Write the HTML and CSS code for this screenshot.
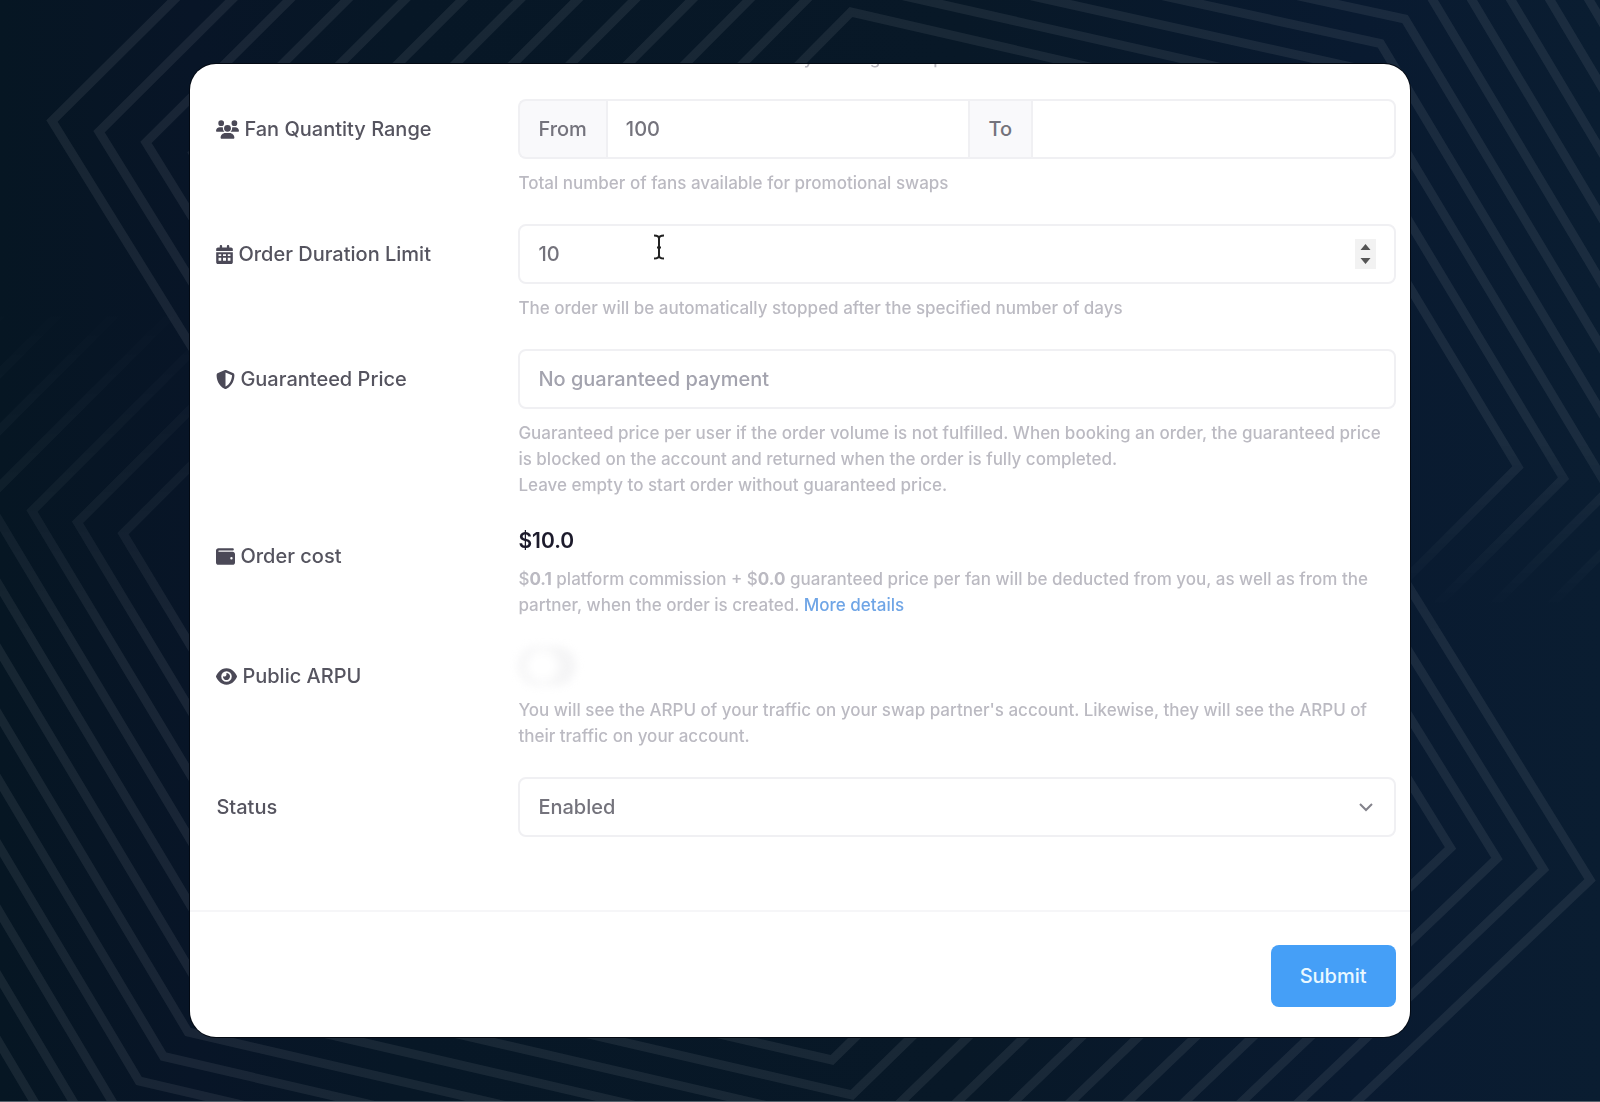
FILE: index.html
```html
<!DOCTYPE html>
<html lang="en">
<head>
    <meta charset="UTF-8">
    <meta name="viewport" content="width=device-width, initial-scale=1.0">
    <title>Order settings</title>
    <link rel="stylesheet" href="styles.css">
</head>
<body>
    <svg class="backdrop" viewBox="0 0 1600 1102" preserveAspectRatio="xMidYMid slice" aria-hidden="true">
        <defs>
            <linearGradient id="fadeDown" gradientUnits="userSpaceOnUse" x1="0" y1="0" x2="0" y2="1102">
                <stop offset="0.4" stop-color="#fff"/>
                <stop offset="0.56" stop-color="#000"/>
            </linearGradient>
            <linearGradient id="fadeUp" gradientUnits="userSpaceOnUse" x1="0" y1="0" x2="0" y2="1102">
                <stop offset="0.26" stop-color="#000"/>
                <stop offset="0.58" stop-color="#fff"/>
            </linearGradient>
            <mask id="topMask" maskUnits="userSpaceOnUse" x="0" y="0" width="1600" height="1102"><rect width="1600" height="1102" fill="url(#fadeDown)"/></mask>
            <mask id="bottomMask" maskUnits="userSpaceOnUse" x="0" y="0" width="1600" height="1102"><rect width="1600" height="1102" fill="url(#fadeUp)"/></mask>
        </defs>
        <g mask="url(#topMask)"><g id="topRings" class="rings"></g></g>
        <g mask="url(#bottomMask)"><g id="bottomRings" class="rings"></g></g>
    </svg>

    <main class="card">
        <form class="form">
            <div class="fields">
                <p class="help previous">Overall number of fans from traffic you will get swaps</p>

                <div class="row">
                    <label class="label" for="fanFrom">
                        <svg class="icon icon-wide" viewBox="0 0 640 512"><path d="M144 0a80 80 0 1 1 0 160A80 80 0 1 1 144 0zM512 0a80 80 0 1 1 0 160A80 80 0 1 1 512 0zM0 298.700C0 239.800 47.800 192 106.700 192h42.700c15.900 0 31 3.500 44.600 9.700c-1.300 7.200-1.900 14.700-1.900 22.300c0 38.200 16.800 72.500 43.300 96H21.300C9.600 320 0 310.400 0 298.700zM405.300 320h-.7c26.600-23.500 43.300-57.800 43.300-96c0-7.600-.7-15-1.900-22.300c13.600-6.300 28.700-9.700 44.600-9.700h42.700C592.200 192 640 239.800 640 298.700c0 11.800-9.600 21.300-21.300 21.300H405.300zM224 224a96 96 0 1 1 192 0 96 96 0 1 1-192 0zM128 485.300C128 411.700 187.700 352 261.300 352H378.700C452.300 352 512 411.700 512 485.300c0 14.700-11.900 26.700-26.700 26.700H154.700c-14.700 0-26.700-11.900-26.700-26.700z"/></svg>
                        Fan Quantity Range
                    </label>
                    <div class="field">
                        <div class="input-group">
                            <label class="addon" for="fanFrom">From</label>
                            <input class="control" id="fanFrom" type="text" value="100">
                            <label class="addon" for="fanTo">To</label>
                            <input class="control" id="fanTo" type="text">
                        </div>
                        <p class="help">Total number of fans available for promotional swaps</p>
                    </div>
                </div>

                <div class="row">
                    <label class="label" for="duration">
                        <svg class="icon" viewBox="0 0 448 512"><path d="M128 0c17.700 0 32 14.300 32 32V64H288V32c0-17.700 14.300-32 32-32s32 14.300 32 32V64h48c26.500 0 48 21.500 48 48v48H0V112C0 85.500 21.500 64 48 64H96V32c0-17.700 14.300-32 32-32zM0 192H448V464c0 26.500-21.500 48-48 48H48c-26.500 0-48-21.500-48-48V192zm64 56v48h72v-48zm120 0v48h80v-48zm128 0v48h72v-48zM64 344v80h72v-80zm120 0v80h80v-80zm128 0v80h72v-80z" fill-rule="evenodd"/></svg>
                        Order Duration Limit
                    </label>
                    <div class="field">
                        <div class="with-cursor">
                            <input class="control" id="duration" type="number" value="10">
                            <svg class="cursor" viewBox="0 0 12 26" aria-hidden="true"><path d="M1 1.500c3 0 5 .8 5 3v17c0 2.200-2 3-5 3M11 1.500c-3 0-5 .8-5 3m0 17c0 2.200 2 3 5 3M4 13.500h4"/></svg>
                        </div>
                        <p class="help">The order will be automatically stopped after the specified number of days</p>
                    </div>
                </div>

                <div class="row">
                    <label class="label" for="guaranteed">
                        <svg class="icon icon-square" viewBox="0 0 512 512"><path fill-rule="evenodd" d="M256 0c4.600 0 9.200 1 13.400 2.900L457.700 82.800c22 9.300 38.400 31 38.300 57.200c-.5 99.200-41.300 280.700-213.600 363.200c-16.700 8-36.100 8-52.800 0C57.300 420.700 16.500 239.200 16 140c-.1-26.200 16.300-47.900 38.300-57.200L242.700 2.900C246.800 1 251.400 0 256 0zm0 66.800V444.800C394 378 431.100 230.100 432 141.400L256 66.800z"/></svg>
                        Guaranteed Price
                    </label>
                    <div class="field">
                        <input class="control" id="guaranteed" type="text" placeholder="No guaranteed payment">
                        <p class="help">Guaranteed price per user if the order volume is not fulfilled. When booking an order, the guaranteed price is blocked on the account and returned when the order is fully completed.<br>Leave empty to start order without guaranteed price.</p>
                    </div>
                </div>

                <div class="row">
                    <span class="label">
                        <svg class="icon icon-square" viewBox="0 0 512 512"><path fill-rule="evenodd" d="M64 32C28.700 32 0 60.700 0 96V416c0 35.300 28.700 64 64 64H448c35.300 0 64-28.700 64-64V192c0-35.300-28.700-64-64-64H80c-8.800 0-16-7.200-16-16s7.200-16 16-16H448c17.700 0 32-14.300 32-32s-14.300-32-32-32H64zM416 272a32 32 0 1 1 0 64 32 32 0 1 1 0-64z"/></svg>
                        Order cost
                    </span>
                    <div class="field">
                        <strong class="cost">$10.0</strong>
                        <p class="help">$<b>0.1</b> platform commission + $<b>0.0</b> guaranteed price per fan will be deducted from you, as well as from the partner, when the order is created. <a href="#details">More details</a></p>
                    </div>
                </div>

                <div class="row">
                    <label class="label" for="publicArpu">
                        <svg class="icon icon-eye" viewBox="0 0 576 512"><path fill-rule="evenodd" d="M288 32c-80.800 0-145.500 36.800-192.600 80.600C48.600 156 17.300 208 2.500 243.700c-3.300 7.900-3.300 16.700 0 24.600C17.300 304 48.600 356 95.400 399.400C142.500 443.200 207.200 480 288 480s145.500-36.800 192.600-80.600c46.800-43.500 78.100-95.400 93-131.100c3.300-7.900 3.300-16.700 0-24.600c-14.900-35.700-46.200-87.700-93-131.100C433.500 68.800 368.800 32 288 32zM144 256a144 144 0 1 1 288 0 144 144 0 1 1-288 0zm144-64c0 35.300-28.700 64-64 64c-7.100 0-13.900-1.200-20.300-3.300c-5.500-1.800-11.900 1.600-11.700 7.400c.3 6.900 1.300 13.800 3.200 20.700c13.700 51.200 66.400 81.600 117.600 67.900s81.600-66.400 67.900-117.600c-11.100-41.500-47.800-69.400-88.600-71.100c-5.800-.2-9.200 6.100-7.400 11.700c2.100 6.400 3.300 13.200 3.300 20.300z"/></svg>
                        Public ARPU
                    </label>
                    <div class="field">
                        <input class="toggle" id="publicArpu" type="checkbox">
                        <p class="help">You will see the ARPU of your traffic on your swap partner's account. Likewise, they will see the ARPU of their traffic on your account.</p>
                    </div>
                </div>

                <div class="row">
                    <label class="label" for="status">Status</label>
                    <div class="field">
                        <select class="control" id="status">
                            <option>Enabled</option>
                            <option>Disabled</option>
                        </select>
                    </div>
                </div>
            </div>

            <div class="footer">
                <button class="btn" type="submit">Submit</button>
            </div>
        </form>
    </main>

    <script src="rings.js"></script>
</body>
</html>
```

FILE: styles.css
```css
* {
    margin: 0;
    padding: 0;
    box-sizing: border-box;
}

body {
    font-family: Inter, 'Liberation Sans', sans-serif;
    font-size: 20px;
    font-weight: 500;
    color: #55545f;
    background: linear-gradient(90deg, #061623 0%, #081527 12%, #071726 25%, #081827 60%, #091a30 85%, #0a1d31 100%);
    min-height: 100vh;
    padding: 64px 11.9%;
    border-bottom: 1px solid #56616c;
    display: flex;
    align-items: stretch;
}

.backdrop {
    position: fixed;
    inset: 0;
    width: 100%;
    height: 100%;
    z-index: -1;
}

.rings {
    fill: none;
    stroke: rgba(255, 255, 255, 0.07);
    stroke-width: 9;
}

.card {
    flex: 1;
    background: #fff;
    border-radius: 26px;
    box-shadow: 0 0 0 1px #030912;
    overflow: hidden;
}

.form {
    height: 100%;
    display: flex;
    flex-direction: column;
}

.fields {
    flex: 1;
    padding: 0 14px 0 26px;
    display: flex;
    flex-direction: column;
    gap: 28px;
}

.row {
    display: grid;
    grid-template-columns: 302px 1fr;
}

.label {
    display: flex;
    align-items: center;
    gap: 5px;
    height: 60px;
}

.icon {
    width: 17px;
    height: 19px;
    fill: #4b4957;
}

.icon-wide {
    width: 23px;
}

.icon-square {
    width: 19px;
}

.icon-eye {
    width: 21px;
}

.control {
    display: block;
    width: 100%;
    height: 60px;
    padding: 0 18px;
    border: 2px solid #f0f0f3;
    border-radius: 8px;
    background: #fff;
    font: inherit;
    color: #74737c;
    outline: none;
}

.control::placeholder {
    color: #a3a3ae;
    opacity: 1;
}

.input-group {
    display: flex;
}

.input-group .control {
    flex: 1;
    min-width: 0;
    border-radius: 0;
}

.input-group .control:last-child {
    border-radius: 0 8px 8px 0;
}

.addon {
    display: flex;
    align-items: center;
    padding: 0 19px 0 18px;
    border: 2px solid #f0f0f3;
    border-width: 2px 0;
    background: #f9f9fb;
    color: #74737c;
}

.addon:first-child {
    border-left-width: 2px;
    border-radius: 8px 0 0 8px;
}

.help {
    margin-top: 11px;
    font-size: 17px;
    line-height: 26px;
    color: #bbbac2;
}

.help b {
    font-weight: 700;
}

.help a {
    color: #6fa5e6;
    text-decoration: none;
}

.previous {
    height: 7px;
    margin: 0 0 0 302px;
    display: flex;
    align-items: flex-end;
}

.with-cursor {
    position: relative;
}

.cursor {
    position: absolute;
    left: 135px;
    top: 10px;
    width: 12px;
    height: 26px;
    fill: none;
    stroke: #222;
    stroke-width: 2;
}

input[type="number"]::-webkit-inner-spin-button {
    appearance: none;
    width: 21px;
    height: 30px;
    opacity: 1;
    background: #f2f2f2 url("data:image/svg+xml,%3Csvg xmlns='http://www.w3.org/2000/svg' viewBox='0 0 21 30'%3E%3Cpath fill='%23555' d='M10.500 5l5 6h-10zM10.500 25l5-6h-10z'/%3E%3C/svg%3E") center no-repeat;
}

select.control {
    appearance: none;
    background: #fff url("data:image/svg+xml,%3Csvg xmlns='http://www.w3.org/2000/svg' width='16' height='10' fill='none' stroke='%2383828b' stroke-width='2'%3E%3Cpath d='M2 2l6 6 6-6'/%3E%3C/svg%3E") right 20px center no-repeat;
}

.cost {
    display: block;
    font-size: 21px;
    font-weight: 600;
    line-height: 29px;
    color: #1c1a2b;
}

.toggle {
    appearance: none;
    display: block;
    width: 58px;
    height: 40px;
    border-radius: 20px;
    background: radial-gradient(circle at 24px 20px, #fff 12px, #f5f5f6 20px);
    filter: blur(4px);
}

.footer {
    display: flex;
    justify-content: flex-end;
    padding: 33px 14px 30px;
    border-top: 2px solid #f6f6f8;
}

.btn {
    height: 62px;
    padding: 0 29px;
    border: none;
    border-radius: 8px;
    background: #459ff7;
    color: #e9f8ff;
    font: inherit;
    cursor: pointer;
}
```

FILE: rings.js
```js
// Concentric hexagons behind the card, 0 is the outermost ring
const RINGS = 13;

function addRing(group, points) {
    const line = document.createElementNS('http://www.w3.org/2000/svg', 'polyline');
    line.setAttribute('points', points.map(p => p.join(',')).join(' '));
    group.appendChild(line);
}

const topRings = document.getElementById('topRings');
const bottomRings = document.getElementById('bottomRings');

for (let k = 0; k < RINGS; k++) {
    const left = [52 + 47 * k, 121 + 10.7 * k];
    const top = [851 - 23.8 * (12 - k), 12 - 33.4 * (12 - k)];
    const topRight = [1405 - 24.5 * (k - 8), 19 + 24.5 * (k - 8)];
    const right = [1518 + 45.5 * (12 - k), 467 + 11.3 * (12 - k)];
    addRing(topRings, [
        [left[0] + 371, left[1] + 600], left, top, topRight, right,
        [right[0] - 300, right[1] + 300]
    ]);
}

for (let k = 0; k < RINGS; k++) {
    const right = [1590 - 46.5 * k, 880 - 10.7 * k];
    const bottom = [852 + 20 * (9 - k), 1095 + 35 * (9 - k)];
    const bottomLeft = [188 + 24.5 * (k - 6), 1032 - 24.5 * (k - 6)];
    const left = [32 - 45.5 * (10 - k), 511 - 11.3 * (10 - k)];
    addRing(bottomRings, [
        [right[0] - 371, right[1] - 600], right, bottom, bottomLeft, left,
        [left[0] + 300, left[1] - 300]
    ]);
}
```
